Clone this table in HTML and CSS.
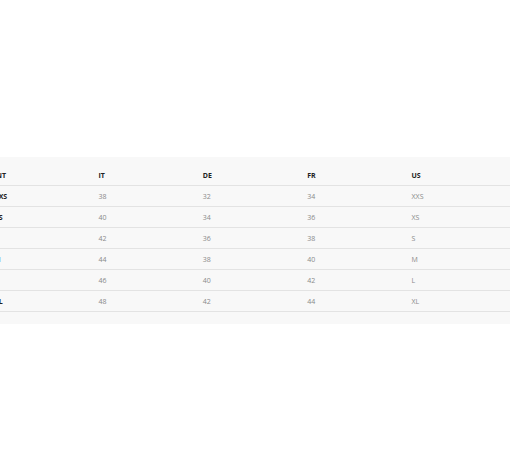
FILE: index.html
```html
<!DOCTYPE html>
<html lang="en">
<head>
<meta charset="utf-8">
<title>Size guide</title>
<link rel="stylesheet" href="styles.css">
</head>
<body>
<main class="page">
  <section class="size-panel">
    <table class="size-table">
      <thead>
        <tr><th>INT</th><th>IT</th><th>DE</th><th>FR</th><th>US</th></tr>
      </thead>
      <tbody>
        <tr><td>XXS</td><td>38</td><td>32</td><td>34</td><td>XXS</td></tr>
        <tr><td>XS</td><td>40</td><td>34</td><td>36</td><td>XS</td></tr>
        <tr><td>S</td><td>42</td><td>36</td><td>38</td><td>S</td></tr>
        <tr><td>M</td><td>44</td><td>38</td><td>40</td><td>M</td></tr>
        <tr><td>L</td><td>46</td><td>40</td><td>42</td><td>L</td></tr>
        <tr><td>XL</td><td>48</td><td>42</td><td>44</td><td>XL</td></tr>
      </tbody>
    </table>
  </section>
</main>
</body>
</html>
```
FILE: styles.css
```css
html, body {
  margin: 0;
  padding: 0;
  background: #ffffff;
}
body {
  font-family: "Open Sans", "Liberation Sans", sans-serif;
  width: 510px;
  height: 470px;
  overflow: hidden;
}
.page {
  padding-top: 157px;
}
.size-panel {
  background: #f8f8f8;
  padding: 8px 0 12px;
  overflow: hidden;
}
.size-table {
  border-collapse: collapse;
  table-layout: fixed;
  width: 522px;
  margin-left: -6px;
  font-size: 7px;
}
.size-table th,
.size-table td {
  height: 20px;
  padding: 0;
  text-align: left;
  vertical-align: middle;
  border-bottom: 1px solid #e3e3e3;
  line-height: 1;
}
.size-table th {
  font-weight: 700;
  color: #222222;
}
.size-table td {
  color: #8a8a8a;
}
.size-table td:first-child {
  font-weight: 700;
  color: #222222;
}
```
